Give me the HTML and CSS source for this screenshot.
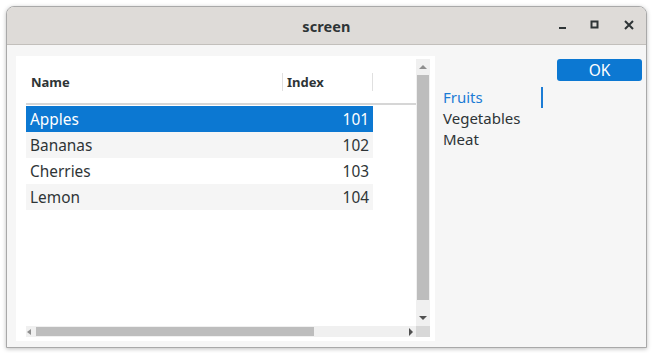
FILE: index.html
```html
<!DOCTYPE html>
<html>
<head>
<meta charset="utf-8">
<link rel="stylesheet" href="styles.css">
</head>
<body>
<div class="window">
  <div class="titlebar">
    <div class="title">screen</div>
    <div class="controls">
      <span class="ctl min"><svg width="10" height="10" viewBox="0 0 10 10"><rect x="1" y="7" width="7" height="2" fill="#2e3436"/></svg></span>
      <span class="ctl max"><svg width="10" height="10" viewBox="0 0 10 10"><rect x="1.5" y="1.5" width="6" height="6" fill="none" stroke="#2e3436" stroke-width="2"/></svg></span>
      <span class="ctl close"><svg width="10" height="10" viewBox="0 0 10 10"><path d="M1 1 L9 9 M9 1 L1 9" stroke="#2e3436" stroke-width="2"/></svg></span>
    </div>
  </div>
  <div class="content">
    <div class="panel">
      <div class="scrollarea">
        <div class="viewport">
          <div class="header">
            <div class="hcell name">Name</div>
            <div class="hcell index">Index</div>
          </div>
          <div class="rows">
            <div class="row selected"><span>Apples</span><span class="num">101</span></div>
            <div class="row alt"><span>Bananas</span><span class="num">102</span></div>
            <div class="row"><span>Cherries</span><span class="num">103</span></div>
            <div class="row alt"><span>Lemon</span><span class="num">104</span></div>
          </div>
        </div>
        <div class="vscroll">
          <span class="arrow up"></span>
          <div class="vthumb"></div>
          <span class="arrow down"></span>
        </div>
        <div class="hscroll">
          <span class="arrow left"></span>
          <div class="htrack"><div class="hthumb"></div></div>
          <span class="arrow right"></span>
        </div>
        <div class="corner"></div>
      </div>
    </div>
    <div class="list">
      <div class="item current">Fruits</div>
      <div class="item">Vegetables</div>
      <div class="item">Meat</div>
    </div>
    <div class="side">
      <button class="ok">OK</button>
    </div>
  </div>
</div>
</body>
</html>
```
FILE: styles.css
```css
* { box-sizing: border-box; }
html, body { margin: 0; padding: 0; background: #ffffff; }
body { width: 652px; height: 353px; overflow: hidden; font-family: "Noto Sans", "Open Sans", sans-serif; color: #2e3436; }

.window {
  position: relative;
  margin: 6px 0 0 6px;
  width: 641px;
  height: 342px;
  border: 1px solid #a9a9a9;
  border-radius: 8px 8px 0 0;
  background: #f6f6f6;
  box-shadow: 0 1px 4px rgba(0,0,0,0.25);
  display: flex;
  flex-direction: column;
}

.titlebar {
  height: 38px;
  background: #dedbd8;
  border-bottom: 1px solid #c2bfbb;
  border-radius: 7px 7px 0 0;
  display: flex;
  align-items: center;
  justify-content: center;
  position: relative;
  flex: none;
}
.title { font-size: 14.5px; font-weight: 700; color: #2e3436; letter-spacing: 0.1px; }
.controls {
  position: absolute;
  right: 12px;
  top: 13px;
  display: flex;
  gap: 22px;
}
.ctl { width: 10px; height: 10px; display: block; }
.ctl svg { display: block; }
.controls .close { margin-left: 2px; }

.content {
  flex: 1;
  display: flex;
  padding: 11px 0 0 9px;
}

.panel {
  width: 419px;
  height: 285px;
  background: #ffffff;
  padding: 3px 5px 3px 10px;
  flex: none;
}

.scrollarea {
  display: grid;
  grid-template-columns: 390px 14px;
  grid-template-rows: 267px 11px;
  height: 278px;
}
.viewport { background: #fff; overflow: hidden; }

.header {
  display: flex;
  height: 46px;
  border-bottom: 2px solid #d6d6d6;
  align-items: center;
  width: 390px;
}
.hcell {
  font-size: 13px;
  font-weight: 700;
  color: #2e3436;
  height: 18px;
  line-height: 18px;
  margin-top: 2px;
}
.hcell.name { width: 257px; padding-left: 5px; border-right: 1px solid #e0e0e0; }
.hcell.index { width: 90px; padding-left: 4px; border-right: 1px solid #e0e0e0; }

.rows { padding-top: 1px; }
.row {
  width: 347px;
  height: 26px;
  display: flex;
  justify-content: space-between;
  align-items: center;
  padding: 0 4px 0 4px;
  font-size: 15.4px;
  color: #2e3436;
}
.row.alt { background: #f5f5f5; }
.row.selected { background: #0c78d2; color: #ffffff; }

.vscroll {
  grid-column: 2;
  grid-row: 1;
  background: #f0f0f0;
  display: flex;
  flex-direction: column;
  align-items: center;
  padding-top: 6px;
  height: 267px;
}
.vthumb { width: 12px; height: 225px; background: #bdbdbd; margin-top: 6px; }
.arrow { width: 0; height: 0; display: block; flex: none; }
.arrow.up { border-left: 4px solid transparent; border-right: 4px solid transparent; border-bottom: 4px solid #8e8e8e; }
.arrow.down { border-left: 4px solid transparent; border-right: 4px solid transparent; border-top: 4px solid #505050; margin-top: 16px; }

.hscroll {
  grid-column: 1;
  grid-row: 2;
  background: #f0f0f0;
  display: flex;
  align-items: flex-end;
  padding-bottom: 1px;
}
.arrow.left { border-top: 3px solid transparent; border-bottom: 3px solid transparent; border-right: 4px solid #8e8e8e; margin: 0 0 1px 1px; }
.arrow.right { border-top: 4px solid transparent; border-bottom: 4px solid transparent; border-left: 4px solid #505050; margin: 0 0 0 0; }
.htrack { flex: none; width: 378px; height: 9px; padding-left: 5px; }
.hthumb { width: 278px; height: 9px; background: #bdbdbd; }
.corner { grid-column: 2; grid-row: 2; background: #d8d8d8; margin-top: 0; }

.list {
  width: 110px;
  padding: 31px 0 0 8px;
  flex: none;
}
.item { font-size: 15px; line-height: 21px; color: #2e3436; height: 21px; }
.item.current { color: #1c7cd5; border-right: 2px solid #1c7cd5; width: 100px; }

.side { flex: 1; padding: 3px 4px 0 12px; }
.ok {
  width: 85px;
  height: 22px;
  background: #0c78d2;
  color: #fff;
  border: none;
  border-radius: 3px;
  font-family: "Noto Sans", "Open Sans", sans-serif;
  font-size: 15.5px;
  line-height: 22px;
  padding: 0;
  display: block;
}
```
